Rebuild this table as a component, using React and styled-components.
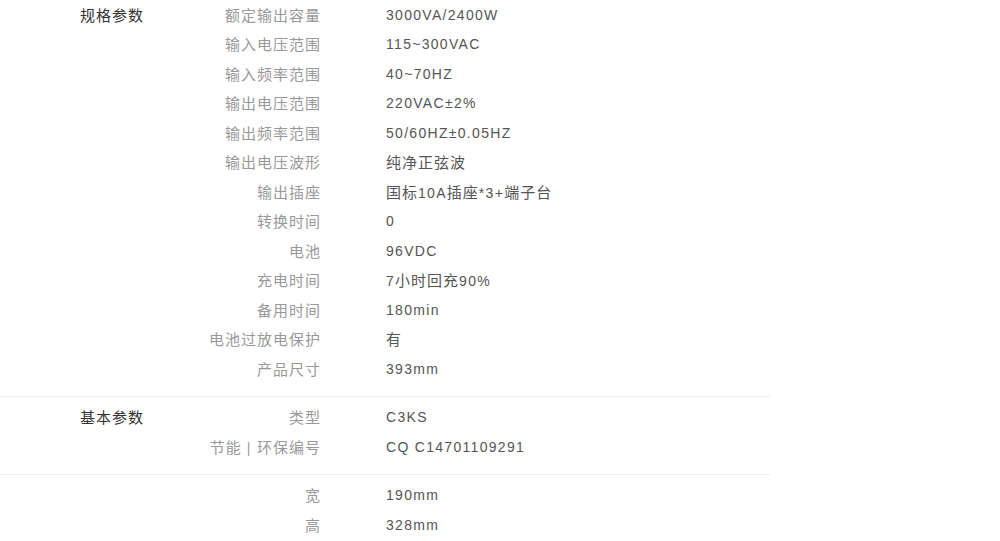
import React from 'react';
import styled, { createGlobalStyle } from 'styled-components';

const GlobalStyle = createGlobalStyle`
  html, body {
    margin: 0;
    background: #fff;
  }
  body {
    font-family: "Liberation Sans", Arial, "Noto Sans CJK SC", sans-serif;
    font-size: 14px;
    letter-spacing: 1.3px;
    overflow: hidden;
  }
`;

const Sheet = styled.div`
  width: 770px;
  margin-top: -5.5px;
`;

const Group = styled.section`
  display: flex;
  padding: 6px 0 12px 80px;
  border-bottom: ${props => (props.$last ? 'none' : '1px solid #ececec')};
`;

const GroupTitle = styled.div`
  width: 120px;
  flex-shrink: 0;
  line-height: 29.5px;
  color: #333;
`;

const Rows = styled.div`
  flex: 1;
`;

const Row = styled.div`
  display: grid;
  grid-template-columns: 121px 1fr;
  column-gap: 65px;
  line-height: 29.5px;
  height: 29.5px;
  white-space: nowrap;
`;

const Name = styled.div`
  text-align: right;
  color: #999;
`;

const Value = styled.div`
  color: #555;
`;

const Han = styled.span`
  font-size: 15px;
  letter-spacing: 1px;
`;

// CJK runs come out a touch wider than the latin text in the original
function Text({ children }) {
  const parts = String(children).split(/([\u3400-\u9fff\uff00-\uffef]+)/);
  return parts.map((p, i) =>
    i % 2 === 1 ? <Han key={i}>{p}</Han> : p
  );
}

const groups = [
  {
    title: '规格参数',
    rows: [
      ['额定输出容量', '3000VA/2400W'],
      ['输入电压范围', '115~300VAC'],
      ['输入频率范围', '40~70HZ'],
      ['输出电压范围', '220VAC±2%'],
      ['输出频率范围', '50/60HZ±0.05HZ'],
      ['输出电压波形', '纯净正弦波'],
      ['输出插座', '国标10A插座*3+端子台'],
      ['转换时间', '0'],
      ['电池', '96VDC'],
      ['充电时间', '7小时回充90%'],
      ['备用时间', '180min'],
      ['电池过放电保护', '有'],
      ['产品尺寸', '393mm'],
    ],
  },
  {
    title: '基本参数',
    rows: [
      ['类型', 'C3KS'],
      ['节能 | 环保编号', 'CQ C14701109291'],
    ],
  },
  {
    title: '',
    rows: [
      ['宽', '190mm'],
      ['高', '328mm'],
    ],
  },
];

export default function App() {
  return (
    <>
      <GlobalStyle />
      <Sheet>
        {groups.map((g, gi) => (
          <Group key={gi} $last={gi === groups.length - 1}>
            <GroupTitle><Text>{g.title}</Text></GroupTitle>
            <Rows>
              {g.rows.map(([name, value]) => (
                <Row key={name}>
                  <Name><Text>{name}</Text></Name>
                  <Value><Text>{value}</Text></Value>
                </Row>
              ))}
            </Rows>
          </Group>
        ))}
      </Sheet>
    </>
  );
}
